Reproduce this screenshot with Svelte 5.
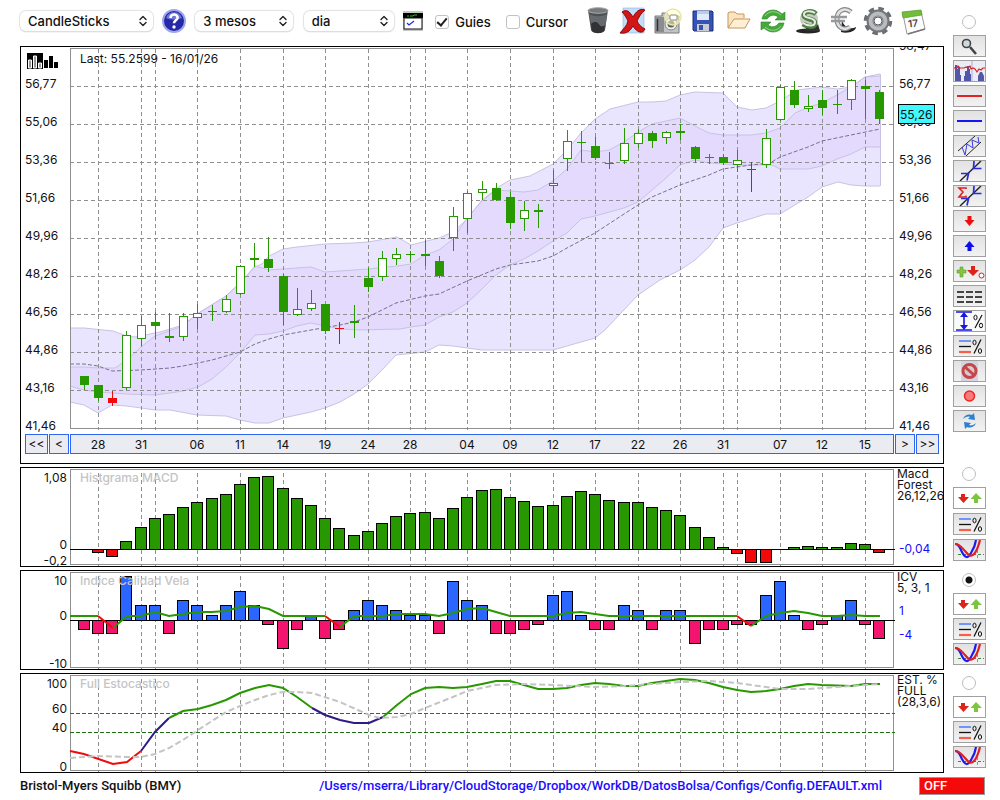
<script>
  const cx = (i) => Math.floor(70 + 14.207 * i);

  // high, body top, body bottom, low, kind: f = filled, h = hollow, r = red
  const candles = [
    [376,376,385,390,'f'],[385,385,398,401,'f'],[391,398,403,406,'r'],[331,335,388,390,'h'],[316,325,339,346,'h'],
    [312,322,326,339,'f'],[313,336,338,342,'f'],[313,316,337,341,'h'],[304,313,318,329,'h'],[305,311,312,321,'f'],
    [295,299,312,313,'h'],[265,266,294,295,'h'],[243,258,260,267,'f'],[237,259,268,272,'f'],[274,276,312,325,'f'],
    [288,309,315,316,'h'],[290,303,309,311,'h'],[304,304,331,334,'f'],[322,328,329,344,'r'],[305,321,323,338,'f'],
    [268,278,287,292,'f'],[251,258,277,281,'h'],[248,254,259,265,'h'],[251,254,255,262,'f'],[240,254,256,266,'f'],
    [256,261,276,278,'f'],[207,216,238,251,'h'],[191,193,219,233,'h'],[181,189,193,200,'h'],[183,188,200,201,'f'],
    [192,197,223,229,'f'],[201,210,219,231,'h'],[204,210,212,228,'f'],[170,183,186,193,'h'],[130,141,159,171,'h'],
    [131,142,143,162,'f'],[137,146,158,160,'f'],[152,163,164,169,'f'],[128,143,161,164,'h'],[129,133,144,148,'h'],
    [131,133,141,148,'f'],[131,132,138,144,'h'],[124,131,133,140,'f'],[146,147,159,163,'f'],[154,157,158,164,'f'],
    [154,157,163,165,'f'],[150,160,165,172,'h'],[162,169,170,192,'r'],[129,138,165,168,'h'],[85,87,120,121,'h'],
    [81,90,105,108,'f'],[95,106,109,112,'h'],[90,100,108,115,'f'],[90,104,105,114,'f'],[79,80,100,110,'h'],
    [80,86,89,119,'f'],[90,92,119,124,'f']
  ];

  const outerTop = '70,328 84,328 113,331 127,336 135,337 160,332 183,325 197,314 226,296 240,283 255,267 262,264 269,256 283,249 297,247 325,244 354,243 368,242 397,237 411,245 439,238 453,232 467,219 482,200 500,186 510,180 530,176 553,164 567,150 581,133 595,119 610,109 638,102 652,102 666,101 680,95 695,92 723,93 737,107 752,110 766,108 780,101 797,90 822,87 837,89 851,87 865,77 880,74';
  const outerLow = '880,186 865,186 851,185 838,182 822,187 808,197 780,214 766,214 737,223 723,228 709,247 695,260 680,270 660,280 638,295 605,330 595,338 567,346 553,350 482,350 453,346 439,345 425,352 396,355 382,370 368,384 354,394 340,402 325,408 311,412 283,418 269,423 255,423 240,420 226,416 197,415 170,410 155,410 127,406 112,405 98,413 84,405 70,402';
  const innerTop = '70,367 84,367 98,368 115,368 127,360 141,347 155,336 183,326 197,314 226,296 240,283 255,266 269,270 283,269 297,268 311,267 325,272 354,270 368,269 397,266 411,264 425,255 439,250 453,239 467,218 482,201 496,190 510,191 524,192 538,190 553,181 567,169 581,150 595,152 609,150 624,142 638,132 652,124 666,121 680,118 695,126 709,133 723,135 751,135 766,133 780,128 795,113 809,107 822,103 837,95 851,87 865,77 880,76';
  const innerLow = '880,147 865,147 851,154 837,159 822,166 808,169 780,169 772,165 737,165 709,163 695,160 680,165 666,178 652,190 638,202 624,208 595,216 581,219 567,233 553,241 538,251 524,259 510,265 496,275 482,289 467,303 453,312 439,317 425,325 411,327 400,329 360,330 340,329 325,326 311,323 297,326 283,331 269,334 255,335 240,353 226,367 212,379 198,387 183,391 170,393 155,395 127,394 112,393 98,392 84,390 70,386';
  const average = '70,364 84,364 98,366 112,371 141,370 170,368 183,366 198,363 212,360 226,356 240,352 255,344 269,339 283,335 311,330 340,325 354,322 368,317 396,303 425,296 439,294 467,281 496,269 510,265 538,261 553,256 567,248 595,233 624,214 638,205 652,197 680,185 709,175 723,169 751,165 770,163 780,157 808,147 822,141 851,135 880,129';

  const prices = ['56,77','55,06','53,36','51,66','49,96','48,26','46,56','44,86','43,16','41,46'];
  const gridX = [98,141,155,197,240,283,325,368,410,425,467,510,553,595,638,680,723,737,780,822,865];
  const dates = [[98,'28'],[141,'31'],[197,'06'],[240,'11'],[283,'14'],[325,'19'],[368,'24'],[410,'28'],[467,'04'],[510,'09'],[553,'12'],[595,'17'],[638,'22'],[680,'26'],[723,'31'],[780,'07'],[822,'12'],[865,'15']];

  // bar ends in panel units, index 0 is the first session
  const macd = [0,552,556,541,527,518,514,507,502,498,494,484,477,476,488,498,505,518,528,535,531,523,516,513,512,518,508,497,490,489,497,501,506,505,496,491,494,500,502,502,507,510,515,527,537,547,553,562,562,0,547,546,547,547,543,544,552];
  const icv = [-2,-3,-3,9,3,3,-3,4,3,1,3,6,3,-1,-6,-2,1,-4,-2,2,4,3,2,1,1,-3,8,4,3,-3,-3,-2,-1,5,6,1,-2,-2,3,2,-2,2,2,-5,-2,-2,-1,-1,5,8,1,-2,-1,1,4,-1,-4];

  const tools = ['trash','delete','camera','save','folder','refresh','dollar','euro','gear','calendar'];
  const draws = ['zoom','histogram','redline','blueline','channel','trend','sigma','down','up','marks','dashes','range','levels','forbid','record','reload'];
</script>

{#snippet grid(top, bottom)}
  {#each gridX as x}
    <line class="grid" x1={x + 0.5} x2={x + 0.5} y1={top} y2={bottom} />
  {/each}
{/snippet}

{#snippet levels()}
  <path d="M5 5h12" stroke="#2f6bff" stroke-width="1.300" /><path d="M5 10.500h12" stroke="#111" stroke-width="1.300" /><path d="M5 16h12" stroke="#f4604c" stroke-width="2.200" />
  <path d="M27 3.500L20 17.500" stroke="#111" fill="none" stroke-width="1.200" /><ellipse cx="20.500" cy="6.500" rx="1.600" ry="2.300" fill="none" stroke="#111" /><ellipse cx="26" cy="15" rx="1.600" ry="2.300" fill="none" stroke="#111" />
{/snippet}

{#snippet plate(name)}
  <svg viewBox="0 0 31 20" width="31" height="20" aria-hidden="true">
    {#if name === 'zoom'}
      <path d="M16 11l6 7" stroke="#444" stroke-width="2.600" /><circle cx="12.500" cy="7.500" r="4" fill="#cfd8dc" stroke="#444" stroke-width="1.600" />
    {:else if name === 'histogram'}
      <rect width="31" height="20" fill="#ececf6" /><path d="M1 20V4h2v4h1v-2h2v8h1v6zM10 20v-5h1v-5h2V5h2v3h1v5h1v7zM24 20v-5l2-4h2l2 4v5z" fill="#5257a6" /><path d="M18 0v20" stroke="#a9acd4" />
      <path d="M0 7h3l1-2 2 2h4l2-1 2 1 2-2 1 3 2-1 2 1 2 3 2-3 2 1 2-2h3" fill="none" stroke="#d22" stroke-width="1.200" />
    {:else if name === 'redline'}
      <path d="M3 10h25" stroke="#e02424" stroke-width="2" />
    {:else if name === 'blueline'}
      <path d="M3 10h25" stroke="#1717f0" stroke-width="2" />
    {:else if name === 'channel'}
      <path d="M4 15L21 0M12 20L27 6" stroke="#222" fill="none" /><path d="M8 11l3 8 2-11 6 4-1-8 7 3-1-6" stroke="#3a3ae0" fill="none" />
    {:else if name === 'trend' || name === 'sigma'}
      <path d="M6 20L27 0" stroke="#222" stroke-width="1.400" /><path d="M7 12.500h7.500l-1.500 7M20 0l-.5 7.500h8" stroke="#2a2ae0" fill="none" stroke-width="1.700" />
      {#if name === 'sigma'}<path d="M12 3V2H5l4 4-4 5h7v-1.500" fill="none" stroke="#e02020" stroke-width="1.600" />{/if}
    {:else if name === 'down'}
      <path d="M13.500 5h4v4h3l-5 6-5-6h3z" fill="#f20d0d" />
    {:else if name === 'up'}
      <path d="M13.500 15h4v-4h3l-5-6-5 6h3z" fill="#0d0df2" />
    {:else if name === 'marks'}
      <path d="M6 6h3v3h3v3H9v4H6v-4H3V9h3z" fill="#86c440" stroke="#5da02c" stroke-width=".6" /><path d="M17 5h4v4h4l-6 6-6-6h4z" fill="#dc2418" /><circle cx="27.500" cy="14.500" r="2.500" fill="#fff" stroke="#dc2418" />
    {:else if name === 'dashes'}
      <path d="M3 6h25M3 11h25M3 16h25" stroke="#444" stroke-width="2" stroke-dasharray="7 2" />
    {:else if name === 'range'}
      <rect x="1" width="29" height="20" fill="#fafafa" /><path d="M2 1h16M2 19h16M10 3v14" stroke="#1717e0" stroke-width="1.600" /><path d="M10 1l4 5H6zM10 19l4-5H6z" fill="#1717e0" />
      <path d="M28 4l-7 13" stroke="#111" stroke-width="1.200" /><ellipse cx="21.500" cy="6.500" rx="1.600" ry="2.300" fill="none" stroke="#111" /><ellipse cx="27" cy="14.500" rx="1.600" ry="2.300" fill="none" stroke="#111" />
    {:else if name === 'levels'}
      {@render levels()}
    {:else if name === 'forbid'}
      <rect x="7" width="17" height="20" fill="#d3d3e2" /><circle cx="15.500" cy="10" r="6.500" fill="#dcc9cc" stroke="#c4474a" stroke-width="3" /><path d="M11 6l9 8" stroke="#c4474a" stroke-width="3" />
    {:else if name === 'record'}
      <circle cx="15.500" cy="10" r="5" fill="#fb7a7a" stroke="#ee2525" stroke-width="1.500" />
    {:else if name === 'reload'}
      <path d="M9 8c2-5 7-5 9-4l2-2 1 7-7-1 2-2c-2-1-5 0-7 2zM22 12c-2 5-7 5-9 4l-2 2-1-7 7 1-2 2c2 1 5 0 7-2z" fill="#2f7fd0" />
    {:else if name === 'arrows'}
      <path d="M7 6h4v3h4l-5.500 6L4 9h3z" fill="#dc2418" /><path d="M20 15h4v-4h4l-6-6-5.500 6h3.500z" fill="#7cc63c" />
    {:else if name === 'cross'}
      <path d="M4 14.500h26" stroke="#3c8a3c" stroke-dasharray="3 2" /><path d="M23.500 10v10" stroke="#9090a8" stroke-dasharray="3 2" />
      <path d="M1 4c4 0 5 4 7 8 3 6 6 7 9 1 2-3 4-6 5-13" fill="none" stroke="#1c1cf0" stroke-width="2.200" /><path d="M1 4c5 0 7 4 10 7 4 5 6 6 9 3 2-2 4-6 6-14" fill="none" stroke="#e02020" stroke-width="2.200" />
    {/if}
  </svg>
{/snippet}

{#snippet tool(name)}
  <svg viewBox="0 0 30 30" width="30" height="30" aria-hidden="true">
    {#if name === 'trash'}
      <path d="M5 4l3 20c1 4 13 4 14 0l3-20z" fill="#4d4f52" /><path d="M6 8c6 3 12 3 18 0l-2 15c-2-5-9-2-9-7-3 0-4 3-4 6z" fill="#66696d" /><path d="M8 18c4-4 8-1 9 2 2 1 4 0 5-1l-1 6c-3 3-9 3-12 0z" fill="#303235" /><ellipse cx="15" cy="4.500" rx="10" ry="2.800" fill="#777a7d" stroke="#a6a8aa" />
    {:else if name === 'delete'}
      <path d="M5 2h21v25H5z" fill="#c4dcf8" stroke="#8db4e4" stroke-width=".6" /><path d="M4 6c5-3 7-1 11 5 3-5 6-9 12-7-4 3-6 7-8 11 2 4 4 6 8 8-2 5-8 4-12-3-3 5-6 8-13 7 3-4 7-7 8-12-2-4-3-6-6-9z" fill="#d31515" stroke="#8c0808" />
    {:else if name === 'camera'}
      <path d="M2 10h7V7h5l2 3h10v17H2z" fill="#c2c4c4" stroke="#77797a" /><path d="M2 11h9v15H2z" fill="#8a8c8d" /><circle cx="18" cy="18" r="6" fill="#eee" stroke="#888" /><circle cx="18" cy="18" r="3.500" fill="#5a5d5f" /><path d="M4.500 13v12" stroke="#333" stroke-width="1.500" /><circle cx="20" cy="11" r="8" fill="#ffffc8" fill-opacity=".55" stroke="#e9e6a8" stroke-width="1.500" /><rect x="17" y="9" width="7" height="5" rx="1" fill="#fff" stroke="#888" />
    {:else if name === 'save'}
      <path d="M5 5h19l1 1v19H6l-1-1z" fill="#3553b4" stroke="#1e2f7c" /><rect x="9" y="5" width="12" height="9" fill="#e2eafa" /><rect x="9" y="5" width="12" height="3" fill="#b5cdf0" /><rect x="9" y="18" width="12" height="7" fill="#c9ccd6" /><rect x="11" y="19" width="4" height="5" fill="#3553b4" />
    {:else if name === 'folder'}
      <path d="M5 22V7l2-1h5l2 2h7v4" fill="#fbe5c0" stroke="#c8935a" /><path d="M5 22l6-9h16l-5 9z" fill="#fff0d4" stroke="#c8935a" />
    {:else if name === 'refresh'}
      <path d="M4 13C5 7 10 4 15 4c4 0 7 2 9 4l3-2v8H17l3-3c-4-3-8-2-11 2z" fill="#45a83c" stroke="#2d8626" stroke-width=".6" /><path d="M26 17c-1 6-6 9-11 9-4 0-7-2-9-4l-3 2v-8h10l-3 3c4 3 8 2 11-2z" fill="#45a83c" stroke="#2d8626" stroke-width=".6" /><path d="M7 10c3-5 11-6 16-1M23 20c-3 5-11 6-16 1" fill="none" stroke="#92d884" />
    {:else if name === 'dollar'}
      <ellipse cx="15" cy="25" rx="12" ry="2.500" fill="#252525" /><path d="M14 20c3 3 9 2 11-2l2 7H12z" fill="#303030" /><circle cx="16" cy="13" r="9" fill="#c6cec2" /><path d="M23 8c-4-4-13-3-12 2 1 4 11 2 11 7s-8 4-12 1" fill="none" stroke="#527c48" stroke-width="5" /><path d="M22 7c-4-3-12-2-11 2 1 4 11 2 11 7s-8 4-12 1" fill="none" stroke="#e6eee0" stroke-width="2" />
    {:else if name === 'euro'}
      <path d="M13 26c7 2 15-1 15-5-5 3-12 1-14-7z" fill="#222" /><path d="M23 6C17 1 9 4 9 13s7 12 13 8" fill="none" stroke="#85888a" stroke-width="5" /><path d="M23 6C17 1 9 4 9 13s7 12 13 8" fill="none" stroke="#dfe1e2" stroke-width="2.600" /><path d="M3 11h16M3 15h14" stroke="#96999b" stroke-width="2.500" />
    {:else if name === 'gear'}
      <circle cx="15" cy="15" r="12" fill="none" stroke="#6b6e70" stroke-width="4.500" stroke-dasharray="5.200 4.220" /><circle cx="15" cy="15" r="8" fill="none" stroke="#74777a" stroke-width="7" /><circle cx="15" cy="15" r="7.500" fill="none" stroke="#b9bcbe" stroke-width="4" /><circle cx="15" cy="15" r="4" fill="#fff" stroke="#585b5d" />
    {:else}
      <path d="M5 8l18-3 4 18-18 5z" fill="#fdfdfd" stroke="#9a9a9a" /><path d="M4 6l19-2 1 5L5 12z" fill="#72be3a" stroke="#519a28" stroke-width=".7" /><path d="M10 28l17-5" stroke="#777" stroke-width="1.500" /><text x="10" y="21" font-size="10" font-weight="600" fill="#444" transform="rotate(-7 15 17)">17</text>
    {/if}
  </svg>
{/snippet}

{#snippet chooser(label, value, cls)}
  <span class="chooser {cls}">
    <select aria-label={label}><option>{value}</option></select>
    <svg viewBox="0 0 8 12" width="8" height="12" aria-hidden="true"><path d="M1 4.500L4 1.500l3 3M1 7.500l3 3 3-3" fill="none" stroke="#222" stroke-width="1.400" stroke-linecap="round" stroke-linejoin="round" /></svg>
  </span>
{/snippet}

{#snippet panelTools(id, checked, cls)}
  <div class="side {cls}">
    <input type="radio" name="panel" value={id} {checked} aria-label={id} />
    <button class="plate white" aria-label="Signals">{@render plate('arrows')}</button>
    <button class="plate" aria-label="Levels">{@render plate('levels')}</button>
    <button class="plate" aria-label="Crossings">{@render plate('cross')}</button>
  </div>
{/snippet}

<div class="app">
  <main class="primary">
    <header>
      {@render chooser('Chart type', 'CandleSticks', 'wide')}
      <button class="icon help" aria-label="Help">
        <svg viewBox="0 0 24 24" width="24" height="24" aria-hidden="true">
          <circle cx="12" cy="12" r="11" fill="#2529a5" stroke="#9da5ee" stroke-width="2" /><path d="M4 9a8.500 8.500 0 0116 0c-5 2-11 2-16 0z" fill="#6e76d8" />
          <path d="M8.500 9c0-5 8-4.500 7 .3-.5 2-3.500 2.400-3.500 5" fill="none" stroke="#fff" stroke-width="2.600" /><circle cx="12" cy="18" r="1.700" fill="#fff" />
        </svg>
      </button>
      {@render chooser('Period', '3 mesos', 'mid')}
      {@render chooser('Interval', 'dia', 'short')}
      <button class="icon table" aria-label="Indicators">
        <svg viewBox="0 0 20 20" width="20" height="20" aria-hidden="true">
          <rect width="20" height="20" fill="#c8c8c8" /><rect y="2" width="20" height="5" fill="#000" /><path d="M4 5h2M7 5h3l1-1h3" stroke="#1fbf1f" /><rect x="1" y="7" width="18" height="11" fill="#fff" stroke="#111" /><path d="M4 12l2 2 5-4" fill="none" stroke="#22e" stroke-width="1.200" />
        </svg>
      </button>
      <label class="check"><input type="checkbox" checked />Guies</label>
      <label class="check"><input type="checkbox" />Cursor</label>
      <div class="tools">
        {#each tools as name}
          <button class="icon" aria-label={name}>{@render tool(name)}</button>
        {/each}
      </div>
    </header>

    <section class="panel">
      <svg class="chart" viewBox="21 47 922 387" role="img" aria-label="Price">
        <polygon points="{outerTop} {outerLow}" fill="#eae5fe" />
        <polygon points="{innerTop} {innerLow}" fill="#e3dafd" />
        <g fill="none" stroke="#c8c2e4"><polyline points={outerTop} /><polyline points={outerLow} /><polyline points={innerTop} /><polyline points={innerLow} /><path d="M880.500 74v112" /></g>
        {@render grid(49, 430)}
        {#each prices as p, i}
          {#if i < 9}<line class="grid" x1="70" x2="895" y1={86.5 + i * 38} y2={86.5 + i * 38} />{/if}
          <text x="25" y={88 + i * 38}>{p}</text>
          <text x="899" y={88 + i * 38}>{p}</text>
        {/each}
        <text x="899" y="50">58,47</text>
        <polyline points={average} fill="none" stroke="#77708f" stroke-dasharray="4 2" />
        <rect class="frame" x="70.5" y="48.5" width="823" height="380" />
        {#each candles as [hi, top, bot, lo, kind], i}
          {@const x = cx(i + 1)}
          {@const c = kind === 'r' ? '#f20a0a' : '#289800'}
          <line x1={x + 0.5} x2={x + 0.5} y1={hi} y2={lo} stroke={c} />
          {#if kind === 'h'}
            <rect x={x - 3.5} y={top + 0.5} width="8" height={bot - top - 1} fill="#fff" stroke={c} />
          {:else}
            <rect x={x - 4} y={top} width="9" height={bot - top} fill={c} />
          {/if}
        {/each}
        <rect x="898.5" y="104.500" width="36" height="19" fill="#40f8ff" stroke="#000" />
        <text x="900" y="119">55,26</text>
        <text x="80" y="63">Last: 55.2599 - 16/01/26</text>
        <g>
          <rect x="27" y="53" width="16" height="16" fill="#000" /><path d="M28.500 60h3v8h-3zM33.500 56h3v12h-3zM38.500 63h3v5h-3z" fill="#999" stroke="#fff" />
          <path d="M44 60h4v8h-4zM49 56h4v12h-4zM54 62h4v6h-4z" />
        </g>
      </svg>
      <nav>
        <button class="first">&lt;&lt;</button>
        <button class="step">&lt;</button>
        <div class="dates">
          <svg class="chart" viewBox="71 435 822 18" aria-label="Dates" role="img">
            {#each dates as [x, d]}<text {x} y="449" text-anchor="middle">{d}</text>{/each}
          </svg>
        </div>
        <button class="step">&gt;</button>
        <button class="first">&gt;&gt;</button>
      </nav>
    </section>
  </main>

  <div class="side">
    <input type="radio" name="panel" value="price" aria-label="Price" />
    {#each draws as name}
      <button class="plate" aria-label={name}>{@render plate(name)}</button>
    {/each}
  </div>

  <section class="panel">
    <svg class="chart" viewBox="21 468 922 98" role="img" aria-label="MACD">
      <rect class="frame" x="70.5" y="469.5" width="823" height="95" />
      {@render grid(473, 566)}
      <text class="title" x="80" y="482">Histgrama MACD</text>
      {#each macd as v, i}
        {#if v}
          <rect x={cx(i + 1) - 5.5} y={Math.min(v, 549) + 0.5} width="11" height={Math.abs(549 - v) || 1} fill={v < 549 ? '#289800' : '#f20a0a'} stroke="#000" />
        {/if}
      {/each}
      <path d="M70 549.500h825" stroke="#000" />
      <g text-anchor="end"><text x="67" y="482">1,08</text><text x="67" y="549">0</text><text x="67" y="565">-0,2</text></g>
      <text x="897" y="478">Macd</text><text x="897" y="489">Forest</text><text x="897" y="500">26,12,26</text>
      <text class="now" x="899" y="553">-0,04</text>
    </svg>
  </section>
  {@render panelTools('MACD', false, 'loose')}

  <section class="panel">
    <svg class="chart" viewBox="21 571 922 98" role="img" aria-label="ICV">
      <rect class="frame" x="70.5" y="572.5" width="823" height="95" />
      {@render grid(576, 669)}
      {#each icv as v, i}
        {@const h = v > 0 ? Math.round(v * 4.9) : Math.round(-v * 4.8) - 1}
        <rect x={cx(i + 1) - 5.5} y={v > 0 ? 620.5 - h : 620.5} width="11" height={h} fill={v > 0 ? '#2a66ff' : '#f3146f'} stroke="#000" />
      {/each}
      <path d="M70 620.500h825" stroke="#000" />
      <text class="title" x="80" y="585">Indice Calidad Vela</text>
      <g fill="none" stroke-width="2">
        <polyline stroke="#289800" points="70,616 98,616" /><polyline stroke="#f20a0a" points="98,616 113,628" />
        <polyline stroke="#289800" points="113,628 127,616 141,616 155,612 169,616 183,614 197,612 212,612 226,611 240,607 255,606 269,609 283,616 325,616" />
        <polyline stroke="#f20a0a" points="325,616 340,627" />
        <polyline stroke="#289800" points="340,627 354,616 382,616 397,614 425,614 439,616 453,613 467,609 482,608 496,612 510,616 553,616 567,613 581,612 609,616 737,616" />
        <polyline stroke="#f20a0a" points="737,616 751,626" />
        <polyline stroke="#289800" points="751,626 766,616 780,613 794,611 808,613 822,616 837,616 851,615 865,616 880,616" />
      </g>
      <g text-anchor="end"><text x="67" y="585">10</text><text x="67" y="620">0</text><text x="67" y="668">-10</text></g>
      <text x="897" y="581">ICV</text><text x="897" y="592">5, 3, 1</text>
      <text class="now" x="899" y="615">1</text><text class="now" x="899" y="639">-4</text>
    </svg>
  </section>
  {@render panelTools('ICV', true, 'lower')}

  <section class="panel">
    <svg class="chart" viewBox="21 674 922 98" role="img" aria-label="Stochastic">
      <rect class="frame" x="70.5" y="675.5" width="823" height="95" />
      {@render grid(679, 772)}
      <path d="M70 713.500h825" stroke="#e81414" stroke-dasharray="4 2" /><path d="M70 732.500h825" stroke="#1d6e14" stroke-dasharray="4 2" />
      <text class="title" x="80" y="688">Full Estocastico</text>
      <g fill="none" stroke-width="2">
        <polyline stroke="#f20a0a" points="70,751 84,754 113,764 127,762 141,751" />
        <polyline stroke="#2f1a86" points="141,751 155,732 169,718" />
        <polyline stroke="#289800" points="169,718 183,711 198,709 212,705 226,700 240,693 255,688 269,685 283,688 297,697 312,708" />
        <polyline stroke="#2f1a86" points="312,708 325,715 340,720 354,723 369,723 383,717" />
        <polyline stroke="#289800" points="383,717 397,705 411,694 425,688 439,687 453,688 467,687 482,684 496,681 510,681 524,685 538,689 553,689 567,688 581,685 595,683 609,684 624,686 638,686 652,683 666,681 680,679 695,680 709,683 723,687 737,690 751,692 766,691 780,689 794,686 808,684 822,685 851,686 865,684 880,684" />
        <polyline stroke="#c4c4c4" stroke-dasharray="6 3" points="70,758 98,756 127,757 141,757 155,754 169,748 183,740 198,730 226,712 240,706 255,700 269,695 283,692 297,692 312,693 340,702 369,715 380,718 397,717 411,714 425,708 453,697 467,691 482,688 496,685 524,684 553,685 595,687 624,686 652,684 680,682 709,681 737,683 766,687 780,689 808,689 837,687 865,685 880,684" />
      </g>
      <g text-anchor="end"><text x="67" y="688">100</text><text x="67" y="713">60</text><text x="67" y="732">40</text><text x="67" y="771">0</text></g>
      <text x="897" y="684">EST. %</text><text x="897" y="695">FULL</text><text x="897" y="706">(28,3,6)</text>
    </svg>
  </section>
  {@render panelTools('Stochastic', false, 'lower')}
</div>

<footer>
  <span>Bristol-Myers Squibb (BMY)</span>
  <span class="path">/Users/mserra/Library/CloudStorage/Dropbox/WorkDB/DatosBolsa/Configs/Config.DEFAULT.xml</span>
  <button class="off">OFF</button>
</footer>

<style>
  :global(body) { background: #fff; color: #111; font: 500 13px/16px Inter, "Liberation Sans", sans-serif; }
  button, select { font: inherit; color: inherit; margin: 0; padding: 0; box-sizing: border-box; }
  .app { display: grid; grid-template-columns: minmax(0, 1fr) 33px; column-gap: 9px; row-gap: 3px; padding: 0 14px 0 20px; align-items: start; }
  .primary { min-width: 0; }
  header { display: flex; align-items: center; height: 46px; padding-bottom: 4px; box-sizing: border-box; }
  .chooser { display: grid; align-items: center; }
  .chooser select { grid-area: 1 / 1; appearance: none; width: 100%; height: 20px; padding: 0 20px 0 8px; border: 0; border-radius: 6px; background: #fff; box-shadow: 0 0 1px 1px #e2e2e2, 0 1px 1px #bbb; }
  .chooser svg { grid-area: 1 / 1; justify-self: end; margin-right: 6px; pointer-events: none; }
  .wide { width: 134px; }
  .mid { width: 98px; }
  .short { width: 91px; margin-left: 11px; }
  .icon { border: 0; background: none; display: flex; }
  .help { margin: 0 9px; }
  .table { margin: 0 12px 0 9px; }
  .check { display: flex; align-items: center; gap: 6px; margin-right: 15px; padding-top: 2px; }
  .check input { appearance: none; width: 14px; height: 14px; margin: 0; border: 1px solid #c2c2c2; border-radius: 3px; background: #fff; display: grid; place-items: center; }
  .check input:checked::before { content: ""; width: 4px; height: 8px; margin-bottom: 2px; border: solid #222; border-width: 0 2px 2px 0; transform: rotate(40deg); }
  .tools { display: flex; gap: 5px; margin-left: auto; margin-right: 16px; }
  .panel { border: 1px solid #000; min-width: 0; }
  .chart { display: block; width: 100%; height: auto; }
  .chart text { font-size: 12px; font-weight: 400; fill: #111; }
  .chart .title { fill: #c4c4c4; font-weight: 500; }
  .chart .now { fill: #1a0dff; }
  .grid { stroke: #8f8f8f; stroke-dasharray: 4 3; }
  .frame { fill: none; stroke: #8f8f8f; }
  nav { display: flex; gap: 1px; padding: 0 4px 9px; font-size: 12px; font-weight: 400; }
  nav button, .dates { height: 20px; border: 1px solid #2f66f0; background: #ebebf2; box-sizing: border-box; }
  .first { width: 23px; }
  .step { width: 20px; }
  .dates { flex: 1; min-width: 0; overflow: hidden; }
  .side { display: flex; flex-direction: column; align-items: center; gap: 3px; padding-top: 15px; }
  .side input { appearance: none; width: 14px; height: 14px; margin: 0 2px 3px 0; border: 1px solid #bdbdbd; border-radius: 50%; background: #fff; }
  .side input:checked { background: radial-gradient(circle, #111 3px, #fff 4px); }
  .side.loose { gap: 4px; padding-top: 0; }
  .side.loose input { margin-bottom: 2px; }
  .side.lower { padding-top: 3px; }
  .plate { width: 33px; height: 22px; border: 1px solid #a0a0a0; background: linear-gradient(#e2e2e2, #f2f2f2); overflow: hidden; }
  .plate svg { display: block; }
  .white { background: #fff; }
  footer { display: flex; align-items: center; padding: 4px 15px 4px 20px; font-family: Roboto, Inter, sans-serif; }
  .path { flex: 1; text-align: right; margin-right: 37px; color: #1a0dff; }
  .off { width: 66px; height: 18px; padding-left: 4px; border: 1px solid #999; background: #f50a0a; color: #fff; text-align: left; line-height: 14px; }
</style>
